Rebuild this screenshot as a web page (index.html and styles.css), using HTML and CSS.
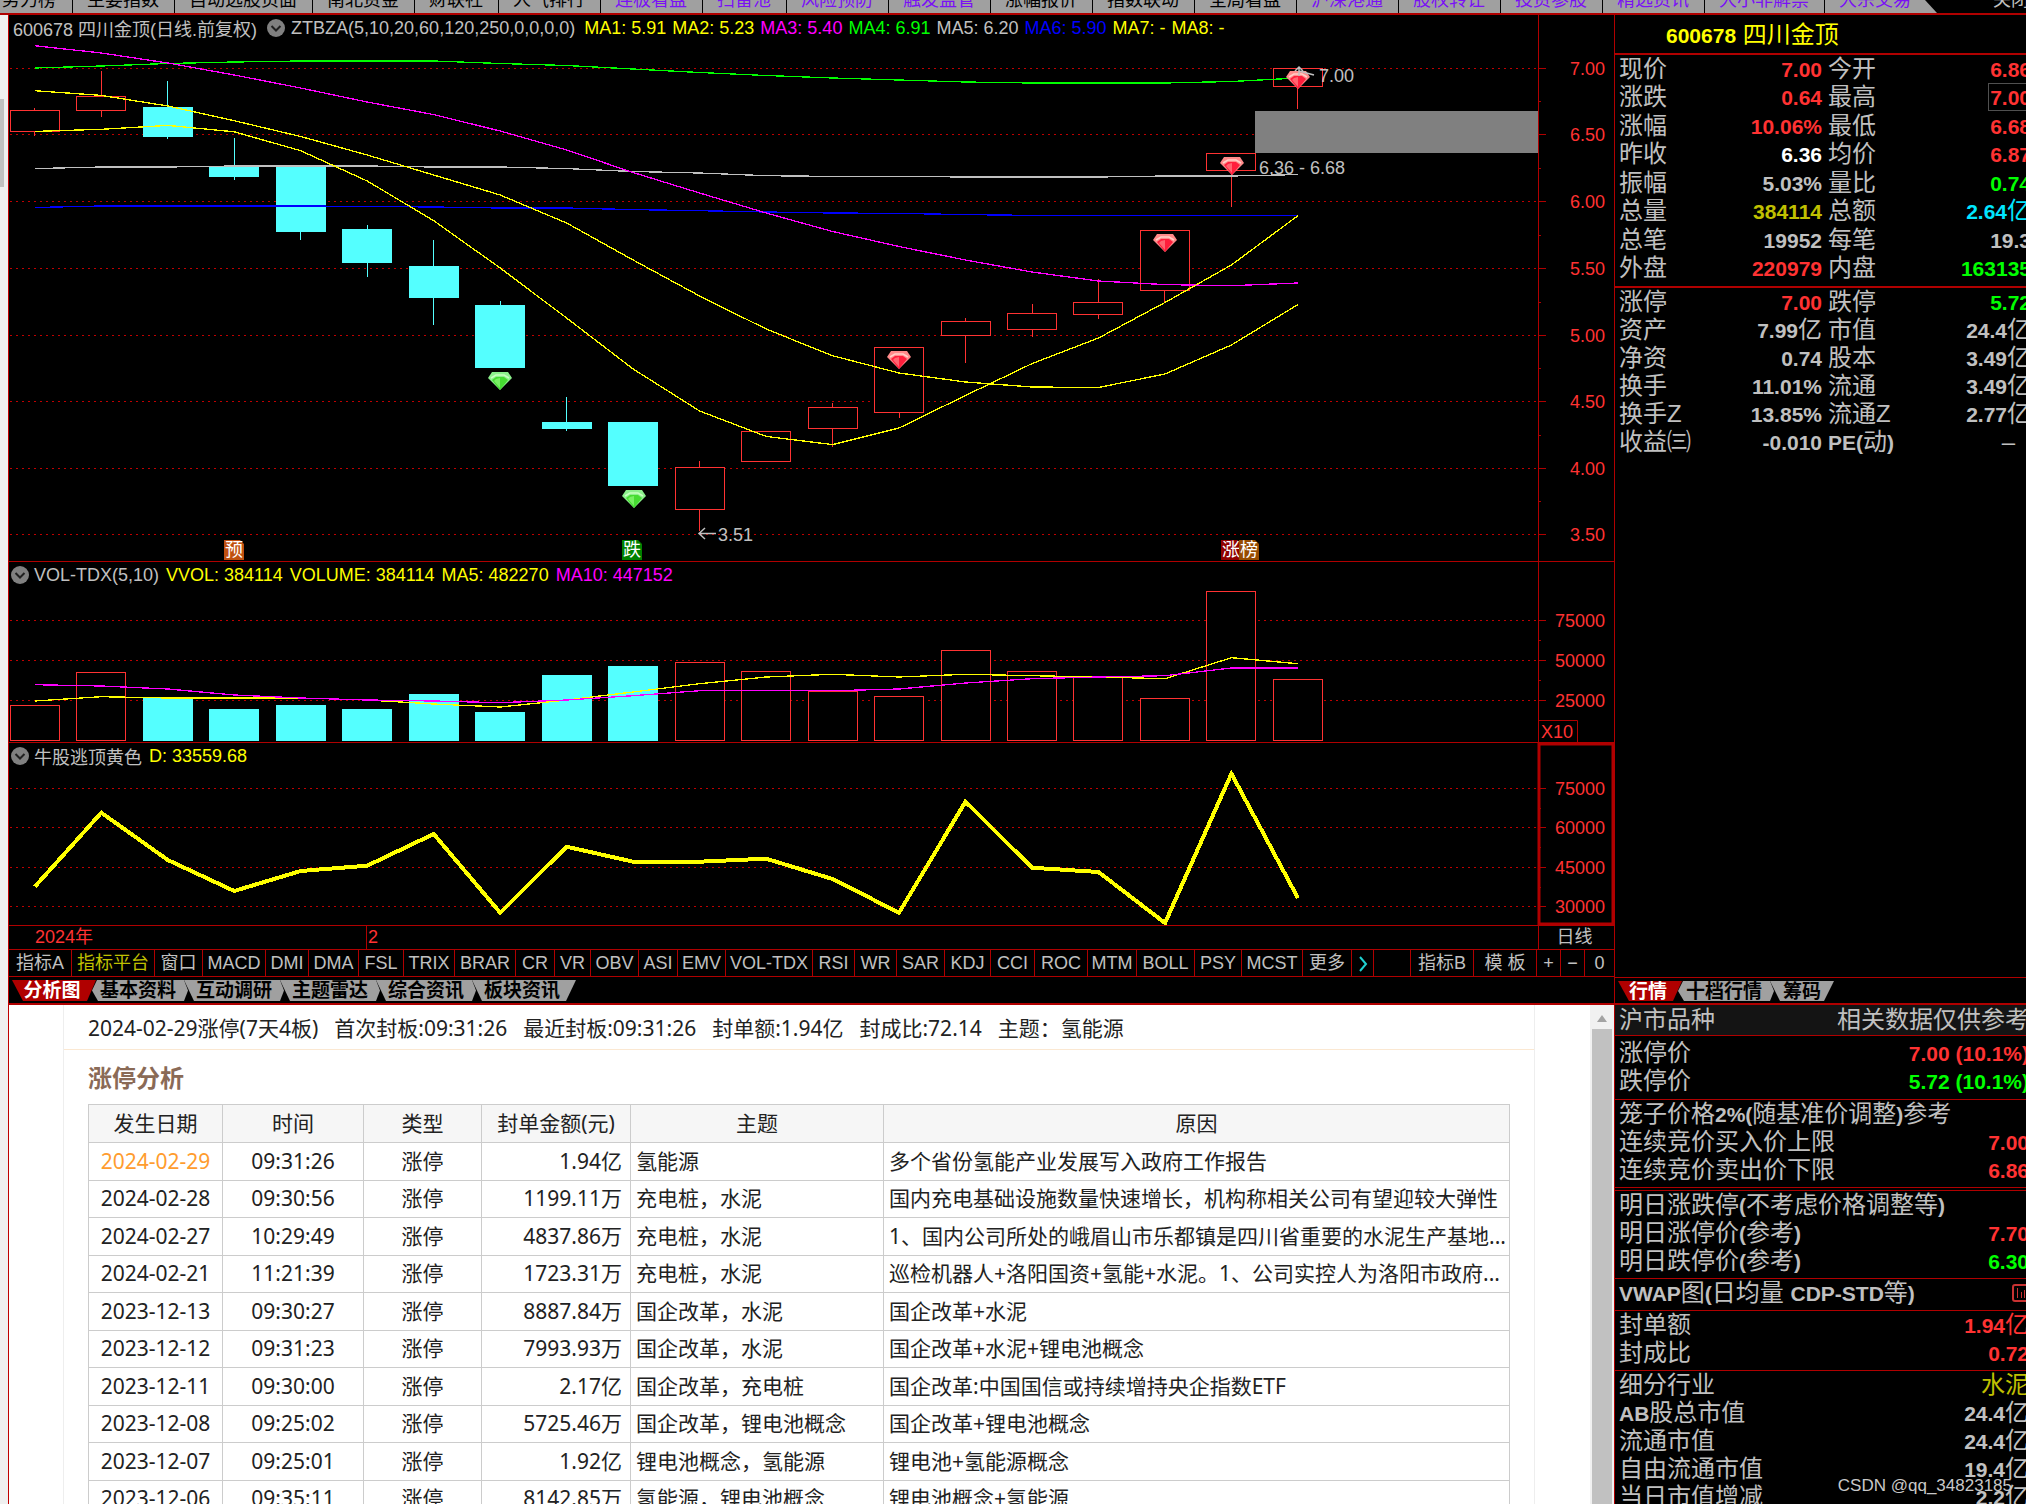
FILE: index.html
```html
<!DOCTYPE html>
<html lang="zh-CN">
<head>
<meta charset="utf-8">
<title>600678 四川金顶</title>
<link rel="stylesheet" href="styles.css">
</head>
<body>
<nav class="topbar">
  <div class="topbar-tabs">
    <button class="first">势力榜</button><button>主要指数</button><button>自动选股页面</button><button>南北资金</button><button>财联社</button><button>人气排行</button><button class="hot">连板看盘</button><button class="hot">扫雷池</button><button class="hot">风险预防</button><button class="hot">触发监管</button><button>涨幅报价</button><button>指数联动</button><button>全局看盘</button><button class="hot">沪深港通</button><button class="hot">股权转让</button><button class="hot">投资参股</button><button class="hot">精选资讯</button><button class="hot">大小非解禁</button><button class="hot last">大宗交易</button>
  </div>
  <button class="close">关闭</button>
</nav>
<div class="layout">
  <div class="gutter"><div class="gutter-thumb"></div></div>
  <main class="charts">
    <section class="chart">
      <header class="legend main">
        <span>600678 四川金顶(日线.前复权)</span>
        <button class="toggle" aria-label="切换指标"><svg viewBox="0 0 18 18"><circle cx="9" cy="9" r="9"/><path d="M4.500 7l4.500 4.500L13.500 7"/></svg></button>
        <span class="formula">ZTBZA(5,10,20,60,120,250,0,0,0,0)</span>
        <span class="yellow">MA1: 5.91</span><span class="yellow">MA2: 5.23</span><span class="magenta">MA3: 5.40</span><span class="green">MA4: 6.91</span><span>MA5: 6.20</span><span class="blue">MA6: 5.90</span><span class="yellow">MA7: -</span><span class="yellow">MA8: -</span>
      </header>
      <svg id="price" viewBox="9 15 1605 546"></svg>
    </section>
    <section class="chart">
      <header class="legend sub">
        <button class="toggle" aria-label="切换指标"><svg viewBox="0 0 18 18"><circle cx="9" cy="9" r="9"/><path d="M4.500 7l4.500 4.500L13.500 7"/></svg></button>
        <span>VOL-TDX(5,10)</span><span class="yellow">VVOL: 384114</span><span class="yellow">VOLUME: 384114</span><span class="yellow">MA5: 482270</span><span class="magenta">MA10: 447152</span>
      </header>
      <svg id="volume" viewBox="9 562 1605 180"></svg>
    </section>
    <section class="chart">
      <header class="legend sub">
        <button class="toggle" aria-label="切换指标"><svg viewBox="0 0 18 18"><circle cx="9" cy="9" r="9"/><path d="M4.500 7l4.500 4.500L13.500 7"/></svg></button>
        <span>牛股逃顶黄色</span><span class="yellow">D: 33559.68</span>
      </header>
      <svg id="signal" viewBox="9 743 1605 182"></svg>
    </section>
    <div class="dates"><span class="year">2024年</span><span class="month">2</span><span class="period">日线</span></div>
    <div class="indicators">
      <button>指标A</button><button class="on">指标平台</button><button>窗口</button><button>MACD</button><button>DMI</button><button>DMA</button><button>FSL</button><button>TRIX</button><button>BRAR</button><button>CR</button><button>VR</button><button>OBV</button><button>ASI</button><button>EMV</button><button>VOL-TDX</button><button>RSI</button><button>WR</button><button>SAR</button><button>KDJ</button><button>CCI</button><button>ROC</button><button>MTM</button><button>BOLL</button><button>PSY</button><button>MCST</button><button>更多</button><button aria-label="下一页"><svg viewBox="0 0 10 16"><path d="M2 1l6 7-6 7"/></svg></button><i></i><button>指标B</button><button>模 板</button><button>+</button><button>−</button><button>0</button>
    </div>
    <div class="tabs">
      <button class="active">分析图</button><button class="second">基本资料</button><button>互动调研</button><button>主题雷达</button><button>综合资讯</button><button class="end">板块资讯</button>
    </div>
    <div class="report">
      <div class="report-view">
        <article>
          <p class="summary"><span>2024-02-29涨停(7天4板)</span><span>首次封板:09:31:26</span><span>最近封板:09:31:26</span><span>封单额:1.94亿</span><span>封成比:72.14</span><span>主题：氢能源</span></p>
          <h2>涨停分析</h2>
          <table>
            <colgroup><col class="c-date"><col class="c-time"><col class="c-type"><col class="c-amount"><col class="c-theme"><col></colgroup>
            <thead><tr><th>发生日期</th><th>时间</th><th>类型</th><th>封单金额(元)</th><th>主题</th><th>原因</th></tr></thead>
            <tbody>
              <tr><td class="now">2024-02-29</td><td>09:31:26</td><td>涨停</td><td>1.94亿</td><td>氢能源</td><td>多个省份氢能产业发展写入政府工作报告</td></tr>
              <tr><td>2024-02-28</td><td>09:30:56</td><td>涨停</td><td>1199.11万</td><td>充电桩，水泥</td><td>国内充电基础设施数量快速增长，机构称相关公司有望迎较大弹性</td></tr>
              <tr><td>2024-02-27</td><td>10:29:49</td><td>涨停</td><td>4837.86万</td><td>充电桩，水泥</td><td>1、国内公司所处的峨眉山市乐都镇是四川省重要的水泥生产基地...</td></tr>
              <tr><td>2024-02-21</td><td>11:21:39</td><td>涨停</td><td>1723.31万</td><td>充电桩，水泥</td><td>巡检机器人+洛阳国资+氢能+水泥。1、公司实控人为洛阳市政府...</td></tr>
              <tr><td>2023-12-13</td><td>09:30:27</td><td>涨停</td><td>8887.84万</td><td>国企改革，水泥</td><td>国企改革+水泥</td></tr>
              <tr><td>2023-12-12</td><td>09:31:23</td><td>涨停</td><td>7993.93万</td><td>国企改革，水泥</td><td>国企改革+水泥+锂电池概念</td></tr>
              <tr><td>2023-12-11</td><td>09:30:00</td><td>涨停</td><td>2.17亿</td><td>国企改革，充电桩</td><td>国企改革:中国国信或持续增持央企指数ETF</td></tr>
              <tr><td>2023-12-08</td><td>09:25:02</td><td>涨停</td><td>5725.46万</td><td>国企改革，锂电池概念</td><td>国企改革+锂电池概念</td></tr>
              <tr><td>2023-12-07</td><td>09:25:01</td><td>涨停</td><td>1.92亿</td><td>锂电池概念，氢能源</td><td>锂电池+氢能源概念</td></tr>
              <tr><td>2023-12-06</td><td>09:35:11</td><td>涨停</td><td>8142.85万</td><td>氢能源，锂电池概念</td><td>锂电池概念+氢能源</td></tr>
            </tbody>
          </table>
        </article>
      </div>
      <div class="scroll"><svg viewBox="0 0 24 24"><path d="M7 17l5-7 5 7z"/></svg><div class="scroll-thumb"></div></div>
    </div>
  </main>
  <aside class="side">
    <h1><b>600678</b> 四川金顶</h1>
    <div class="quote eight">
      <div class="pair"><span>现价</span><span class="red"><b>7.00</b></span></div><div class="pair"><span>今开</span><span class="red"><b>6.86</b></span></div>
      <div class="pair"><span>涨跌</span><span class="red"><b>0.64</b></span></div><div class="pair"><span>最高</span><span class="red boxed"><b>7.00</b></span></div>
      <div class="pair"><span>涨幅</span><span class="red"><b>10.06%</b></span></div><div class="pair"><span>最低</span><span class="red"><b>6.68</b></span></div>
      <div class="pair"><span>昨收</span><span class="white"><b>6.36</b></span></div><div class="pair"><span>均价</span><span class="red"><b>6.87</b></span></div>
      <div class="pair"><span>振幅</span><span><b>5.03%</b></span></div><div class="pair"><span>量比</span><span class="green"><b>0.74</b></span></div>
      <div class="pair"><span>总量</span><span class="olive"><b>384114</b></span></div><div class="pair"><span>总额</span><span class="cyan"><b>2.64</b>亿</span></div>
      <div class="pair"><span>总笔</span><span><b>19952</b></span></div><div class="pair"><span>每笔</span><span><b>19.3</b></span></div>
      <div class="pair"><span>外盘</span><span class="red"><b>220979</b></span></div><div class="pair"><span>内盘</span><span class="green"><b>163135</b></span></div>
    </div>
    <div class="quote six">
      <div class="pair"><span>涨停</span><span class="red"><b>7.00</b></span></div><div class="pair"><span>跌停</span><span class="green"><b>5.72</b></span></div>
      <div class="pair"><span>资产</span><span><b>7.99</b>亿</span></div><div class="pair"><span>市值</span><span><b>24.4</b>亿</span></div>
      <div class="pair"><span>净资</span><span><b>0.74</b></span></div><div class="pair"><span>股本</span><span><b>3.49</b>亿</span></div>
      <div class="pair"><span>换手</span><span><b>11.01%</b></span></div><div class="pair"><span>流通</span><span><b>3.49</b>亿</span></div>
      <div class="pair"><span>换手Z</span><span><b>13.85%</b></span></div><div class="pair"><span>流通Z</span><span><b>2.77</b>亿</span></div>
      <div class="pair"><span>收益㈢</span><span><b>-0.010</b></span></div><div class="pair"><span><b>PE(</b>动<b>)</b></span><span class="none">–</span></div>
    </div>
    <div class="tabs side-tabs">
      <button class="active">行情</button><button class="second">十档行情</button><button class="end">筹码</button>
    </div>
    <div class="info">
      <div class="group head"><div class="pair"><span>沪市品种</span><span>相关数据仅供参考</span></div></div>
      <div class="group limits"><div class="pair"><span>涨停价</span><span class="red"><b>7.00 (10.1%)</b></span></div><div class="pair"><span>跌停价</span><span class="green"><b>5.72 (10.1%)</b></span></div></div>
      <div class="group"><div class="pair"><span>笼子价格<b>2%(</b>随基准价调整<b>)</b>参考</span></div><div class="pair"><span>连续竞价买入价上限</span><span class="red"><b>7.00</b></span></div><div class="pair"><span>连续竞价卖出价下限</span><span class="red"><b>6.86</b></span></div></div>
      <div class="group double"><div class="pair"><span>明日涨跌停<b>(</b>不考虑价格调整等<b>)</b></span></div><div class="pair"><span>明日涨停价<b>(</b>参考<b>)</b></span><span class="red"><b>7.70</b></span></div><div class="pair"><span>明日跌停价<b>(</b>参考<b>)</b></span><span class="green"><b>6.30</b></span></div></div>
      <div class="group"><div class="pair"><span><b>VWAP</b>图<b>(</b>日均量 <b>CDP-STD</b>等<b>)</b></span><button class="mini" aria-label="打开图表"><svg viewBox="0 0 18 18"><rect x="1" y="1" width="16" height="16" rx="2"/><path d="M5.500 4v10M9.500 8v6M12.500 6v8"/></svg></button></div></div>
      <div class="group"><div class="pair"><span>封单额</span><span class="red"><b>1.94</b>亿</span></div><div class="pair"><span>封成比</span><span class="red"><b>0.72</b></span></div></div>
      <div class="group open"><div class="pair"><span>细分行业</span><span class="olive">水泥</span></div><div class="pair"><span><b>AB</b>股总市值</span><span><b>24.4</b>亿</span></div><div class="pair"><span>流通市值</span><span><b>24.4</b>亿</span></div><div class="pair"><span>自由流通市值</span><span><b>19.4</b>亿</span></div><div class="pair"><span>当日市值增减</span><span><b>2.2</b>亿</span></div></div>
    </div>
    <div class="credit">CSDN @qq_34823185</div>
  </aside>
</div>
<script src="chart.js"></script>
</body>
</html>
```
FILE: styles.css
```css
* { box-sizing: border-box; }
body {
  margin: 0;
  height: 100vh;
  overflow: hidden;
  display: flex;
  flex-direction: column;
  background: #000;
  color: #c0c0c0;
  font-family: "Liberation Sans", "Noto Sans CJK SC", sans-serif;
  font-size: 18px;
}
button {
  margin: 0;
  padding: 0;
  border: 0;
  background: none;
  color: inherit;
  font: inherit;
  white-space: nowrap;
}
.yellow { color: #ff0; }
.magenta { color: #f0f; }
.green { color: #0f0; }
.blue { color: #00f; }
.red { color: #ff3232; }
.white { color: #fff; }
.olive { color: #c0c000; }
.cyan { color: #00e6ff; }

/* top bar */
.topbar {
  flex: none;
  display: flex;
  justify-content: space-between;
  height: 15px;
  overflow: hidden;
  border-bottom: 2px solid #b00000;
}
.topbar-tabs {
  display: flex;
  background: #a0a0a0;
  clip-path: polygon(0 0, calc(100% - 12px) 0, 100% 100%, 0 100%);
}
.topbar button { margin-top: -13px; line-height: 26px; height: 26px; }
.topbar-tabs button { padding: 0 15px 0 14px; border-right: 1px solid #000; color: #000; }
.topbar-tabs .first { padding: 0 16px 0 2px; }
.topbar-tabs .hot { color: #7a10f5; }
.topbar-tabs .last { padding-right: 26px; border-right: 0; }
.topbar .close { margin-right: -3px; }

.layout {
  flex: 1;
  min-height: 0;
  display: grid;
  grid-template-columns: 9px minmax(0, 1fr) 412px;
}
.gutter { background: #f0f0f0; border-right: 1px solid #c00000; padding-top: 84px; }
.gutter-thumb { width: 4px; height: 88px; background: #c1c1c1; }

/* charts */
.charts { display: flex; flex-direction: column; min-height: 0; }
.chart { position: relative; flex: none; border-bottom: 1px solid #b00000; }
.chart > svg { display: block; width: 100%; height: auto; }
.legend {
  position: absolute;
  top: 0;
  left: 4px;
  display: flex;
  align-items: center;
  gap: 6px;
  height: 26px;
  white-space: nowrap;
}
.legend.main .toggle { margin-left: 4px; }
.legend .formula { margin-right: 3px; }
.legend.sub { left: 1px; gap: 7px; }
.toggle { display: flex; margin: 0 0 0 1px; }
.sub .toggle { margin-right: -2px; }
.toggle svg { width: 18px; height: 18px; }
.toggle circle { fill: #808080; }
.toggle path { fill: none; stroke: #202020; stroke-width: 2; }

.grid { stroke: #c00000; stroke-dasharray: 2 4; shape-rendering: crispEdges; }
.axis { stroke: #b00000; fill: none; }
.focus { stroke: #b00000; stroke-width: 3; fill: none; }
.label { fill: #ff3232; text-anchor: end; font-size: 18px; }
.note { fill: #c0c0c0; font-size: 18px; }
.up { stroke: #ff3232; fill: #000; }
.down { stroke: #54ffff; fill: #54ffff; }
.band { fill: #808080; }
.line { fill: none; stroke-width: 1.3; shape-rendering: crispEdges; }
.line.strong { stroke-width: 4; }
.s-yellow { stroke: #ff0; }
.s-magenta { stroke: #f0f; }
.s-green { stroke: #0f0; }
.s-blue { stroke: #00f; }
.s-gray { stroke: #c0c0c0; }
.badge { fill: #fff; font-size: 18px; text-anchor: middle; }

.dates {
  flex: none;
  display: grid;
  grid-template-columns: 331px 1fr 76px;
  padding-left: 26px;
  height: 24px;
  line-height: 23px;
  color: #ff3232;
  border-bottom: 1px solid #b00000;
}
.dates .month { border-left: 1px solid #b00000; padding-left: 1px; }
.dates .period { border-left: 1px solid #b00000; color: #c0c0c0; text-align: center; padding-right: 4px; }

.indicators {
  flex: none;
  display: grid;
  grid-template-columns: 63px 83px 48px 63px 43px 50px 45px 51px 61px 39px 36px 48px 39px 48px 87px 42px 42px 48px 46px 44px 53px 49px 58px 47px 61px 49px 22px 1fr 63px 63px 24px 24px 29px;
  height: 27px;
  border-bottom: 1px solid #b00000;
}
.indicators > * { border-right: 1px solid #b00000; line-height: 26px; text-align: center; }
.indicators > :last-child { border-right: 0; }
.indicators .on { color: #c0c000; }
.indicators svg { width: 10px; height: 16px; vertical-align: middle; fill: none; stroke: #20d0d0; stroke-width: 2; }

/* slanted tabs */
.tabs {
  flex: none;
  display: flex;
  height: 28px;
  padding: 3px 0 2px 3px;
  border-bottom: 2px solid #b00000;
}
.tabs button {
  width: 100px;
  margin-right: -4px;
  background: #a0a0a0;
  color: #000;
  font-size: 19px;
  font-weight: bold;
  line-height: 22px;
  clip-path: polygon(0 0, 96px 0, 100% 50%, 96px 100%, 10px 100%);
}
.tabs .active {
  width: 84px;
  margin-right: -8px;
  padding-right: 4px;
  background: #b00000;
  color: #fff;
  clip-path: polygon(0 0, 100% 0, calc(100% - 9px) 100%, 11px 100%);
}
.tabs .second { clip-path: polygon(9px 0, 96px 0, 100% 50%, 96px 100%, 10px 100%, 4px 50%); }
.tabs .end { width: 104px; clip-path: polygon(0 0, 100% 0, calc(100% - 10px) 100%, 10px 100%); padding-right: 4px; }
.side-tabs .active { width: 64px; }
.side-tabs .end { width: 64px; padding: 0; }

/* report */
.report { flex: 1; min-height: 0; display: flex; background: #fff; color: #222; }
.report-view { flex: 1; min-width: 0; padding: 0 55px 0 54px; overflow: hidden; }
article { border: solid #eee; border-width: 0 1px; font: 21px "Noto Sans", "Noto Sans CJK SC", sans-serif; }
.summary { display: flex; gap: 16px; margin: 0; padding-left: 24px; height: 45px; line-height: 46px; white-space: nowrap; border-bottom: 1px solid #fbe8d2; }
article h2 { margin: 0; padding-left: 24px; height: 54px; line-height: 56px; font-size: 24px; color: #8a6a56; }
article table { width: calc(100% - 48px); margin-left: 24px; border-collapse: collapse; table-layout: fixed; }
.c-date { width: 134px; }
.c-time { width: 141px; }
.c-type { width: 118px; }
.c-amount { width: 149px; }
.c-theme { width: 253px; }
article th, article td { height: 38px; padding: 0 5px 2px; border: 1px solid #ccc; line-height: 30px; font-weight: normal; text-align: center; white-space: nowrap; overflow: hidden; }
article th { background: #f6f6f6; }
article tbody tr:nth-child(even) td { height: 37px; }
article td:nth-child(4) { text-align: right; padding-right: 8px; }
article td:nth-child(n+5) { text-align: left; }
article .now { color: #ff9c2e; }
.scroll { width: 24px; background: #f1f1f1; display: flex; flex-direction: column; align-items: center; }
.scroll svg { width: 24px; height: 24px; fill: #a3a3a3; }
.scroll-thumb { flex: 1; width: 20px; background: #c1c1c1; }

/* side panel */
.side {
  position: relative;
  display: flex;
  flex-direction: column;
  min-height: 0;
  overflow: hidden;
  border-left: 1px solid #b00000;
  font-size: 24px;
}
.side b { font-size: 21px; }
.side h1 { flex: none; margin: 0; padding-left: 51px; height: 40px; line-height: 40px; font-size: 24px; font-weight: normal; color: #ff0; border-bottom: 2px solid #b00000; }
.quote { flex: none; display: grid; grid-template-columns: 1fr 1fr; column-gap: 6px; align-content: space-between; margin: 0 -5px 0 4px; }
.quote.eight { height: 231px; padding-bottom: 4px; }
.quote.six { height: 691px; align-content: start; padding-top: 2px; position: relative; }
.quote.six::before { content: ""; position: absolute; top: 0; left: -4px; right: 0; border-top: 2px solid #b00000; }
.pair { display: flex; justify-content: space-between; height: 28px; line-height: 28px; white-space: pre; }
.boxed { outline: 1px solid #505050; outline-offset: -1px; padding-left: 2px; }
.none { padding-right: 16px; }
.side-tabs { border-top: 1px solid #b00000; font-size: 18px; }
.group { padding: 0 0 3px; border-bottom: 1px solid #b00000; }
.group .pair { margin: 0 -3px 0 4px; }
.group.head { padding: 1px 0; background: #141414; }
.group.limits { padding: 3px 0 4px; }
.group.double { margin-top: 2px; border-top: 1px solid #b00000; }
.group.open { border: 0; }
.mini { display: flex; align-items: center; margin-right: -1px; }
.mini svg { width: 18px; height: 18px; fill: none; stroke: #c83232; stroke-width: 2; }
.mini path { stroke-width: 1; }
.credit { position: absolute; right: 14px; bottom: 8px; font-size: 17px; line-height: 20px; color: #c8c8c8; }
```
FILE: chart.js
```js
const STEP = 66.48, FIRST = 34.8, AXIS = 1538, RIGHT = 1605;
const xAt = i => FIRST + STEP * i;
const snap = v => Math.round(v) + 0.5;

const gridLine = y => `<path class="grid" d="M10 ${snap(y)}H${AXIS}"/>`;
const tick = (y, w) => `<path class="axis" d="M${AXIS} ${snap(y)}h${w}"/>`;
const label = (y, t) => `<text class="label" x="${RIGHT}" y="${y + 7}">${t}</text>`;
const line = (ys, cls) => `<polyline class="line ${cls}" points="${ys.map((y, i) => xAt(i).toFixed(1) + ',' + y).join(' ')}"/>`;
const bar = (i, top, bottom, cls) => `<rect class="${cls}" x="${snap(xAt(i) - 25)}" y="${snap(top)}" width="49" height="${Math.round(bottom - top)}"/>`;
const axisLine = (y1, y2) => `<path class="axis" d="M${AXIS}.5 ${y1}V${y2}"/>`;

function scale(rows) {
  return rows.map(([y, t], i) => {
    const next = rows[i + 1];
    return gridLine(y) + tick(y, 8) + label(y, t) + (next ? tick((y + next[0]) / 2, 3) : '');
  }).join('');
}

function gem(x, y, kind) {
  const c = kind === 'up' ? ['#ff8a8a', '#ffd0c8', '#ff1e3c', '#ff6470'] : ['#8cf08c', '#c8ffc0', '#46dc32', '#78f064'];
  return `<g transform="translate(${Math.round(x) - 12} ${Math.round(y)})">
    <path fill="${c[0]}" d="M4 0H20L24 6 12 18 0 6Z"/>
    <path fill="${c[2]}" d="M4 8L8 5H16L20 8 12 18Z"/>
    <path fill="${c[3]}" d="M8 7L12 6V16L6 9Z"/>
    <path fill="none" stroke="${c[1]}" stroke-width="1.500" d="M3 6L8 3H16L21 6"/></g>`;
}

function badge(x, text, color) {
  return `<path fill="${color}" d="M${x} 540H${x + 16}L${x + 20} 544V560H${x}Z"/><text class="badge" x="${x + 10}" y="556">${text}</text>`;
}

/* direction, body top, body bottom, high, low */
const candles = [
  ['up', 110, 131, 108, 136], ['up', 96, 110, 71, 117], ['down', 107, 136, 81, 139], ['down', 167, 176, 138, 180],
  ['down', 167, 231, 167, 240], ['down', 229, 262, 225, 277], ['down', 266, 297, 240, 325], ['down', 305, 367, 301, 367],
  ['down', 422, 428, 397, 431], ['down', 422, 485, 422, 485], ['up', 467, 509, 461, 531], ['up', 431, 461, 431, 461],
  ['up', 407, 428, 403, 447], ['up', 347, 412, 347, 418], ['up', 321, 335, 318, 363], ['up', 313, 329, 304, 337],
  ['up', 302, 314, 279, 319], ['up', 230, 290, 230, 303], ['up', 153, 170, 153, 207], ['up', 68, 86, 68, 109]
];

const price = [
  scale([[68, '7.00'], [134, '6.50'], [201, '6.00'], [268, '5.50'], [335, '5.00'], [401, '4.50'], [468, '4.00'], [534, '3.50']]),
  axisLine(15, 562),
  '<rect class="band" x="1255" y="111" width="283" height="42"/>',
  candles.map(([d, top, bottom, high, low], i) =>
    `<path class="${d}" d="M${snap(xAt(i) - 0.5)} ${high}V${top}M${snap(xAt(i) - 0.5)} ${bottom}V${low}"/>` + bar(i, top, bottom, d)).join(''),
  line([68, 66, 63.5, 62, 61, 61, 61, 63.5, 65.5, 69, 72.5, 75.5, 78, 80, 82, 83, 83, 83, 81.5, 78], 's-green'),
  line([168.6, 167, 167, 166, 166, 166, 167, 167, 168.6, 171.5, 173, 175.7, 176.4, 176.4, 177, 177, 177, 176, 176, 174.6], 's-gray'),
  line([207.5, 206, 206, 206, 206, 206.4, 207, 208, 208, 209.6, 210.7, 212, 213, 213.4, 214.6, 215.4, 215.4, 215.4, 215.4, 215.4], 's-blue'),
  line([45.7, 53, 63, 75, 88, 102, 114.6, 131, 150, 172.5, 193, 213, 231.5, 246.5, 260, 272, 281, 284.6, 285.7, 283], 's-magenta'),
  line([90.7, 95.4, 106, 120.7, 136.5, 155, 175, 195, 223, 260, 296, 329, 355.7, 373, 382, 387, 387.5, 374, 345, 304.6], 's-yellow'),
  line([131.4, 129.3, 125.4, 131.8, 150.7, 181, 220.7, 268, 318, 369, 411, 436.4, 444.6, 428, 395.5, 363.6, 338, 302.5, 265, 215.7], 's-yellow'),
  gem(500, 372, 'down'), gem(634, 490, 'down'),
  gem(899, 351, 'up'), gem(1165, 234, 'up'), gem(1232, 157, 'up'), gem(1298, 71, 'up'),
  '<path class="s-gray" fill="none" stroke-width="1.500" d="M1299 76V67M1295 71L1299 67 1303 71M1299 71L1314 75"/>',
  '<text class="note" x="1319" y="82">7.00</text>',
  '<text class="note" x="1259" y="174">6.36 - 6.68</text>',
  '<path class="s-gray" fill="none" stroke-width="1.500" d="M716 533.500H699M705 528L699 533.500 705 539"/>',
  '<text class="note" x="718" y="541">3.51</text>',
  badge(224, '预', '#c05010'), badge(622, '跌', '#008000'), badge(1221, '涨', '#900000'), badge(1239, '榜', '#964b00')
];
document.getElementById('price').innerHTML = price.join('');

const volumes = [705, 672, 698, 709, 705, 709, 694, 712, 675, 666, 662, 671, 691, 696, 650, 671, 677, 698, 591, 679];
document.getElementById('volume').innerHTML = [
  scale([[620, '75000'], [660, '50000'], [700, '25000']]),
  axisLine(562, 742),
  `<path class="axis" d="M${AXIS} 720.500h39.500V742"/><text class="label" x="1573" y="738">X10</text>`,
  volumes.map((v, i) => bar(i, v, 740, candles[i][0])).join(''),
  line([701, 696.7, 698, 698, 698, 700, 704, 707, 700, 692, 683.7, 677, 674.3, 677, 674.3, 675.7, 677, 678.7, 657.7, 663.7], 's-yellow'),
  line([684.7, 686, 689, 695, 698, 700, 701, 702.7, 700, 695.7, 690.7, 690.7, 690.7, 689, 683, 678.7, 677, 675.7, 668, 668], 's-magenta')
].join('');

document.getElementById('signal').innerHTML = [
  scale([[788, '75000'], [827, '60000'], [867, '45000'], [906, '30000']]),
  axisLine(743, 926),
  `<rect class="focus" x="${AXIS + 1}" y="744" width="74" height="180"/>`,
  line([886.7, 812.7, 860, 891, 871, 865.7, 834, 912.7, 846.7, 861.7, 861.7, 858.7, 879, 912.7, 801.7, 867.7, 872, 923, 773.7, 898], 's-yellow strong')
].join('');
```
